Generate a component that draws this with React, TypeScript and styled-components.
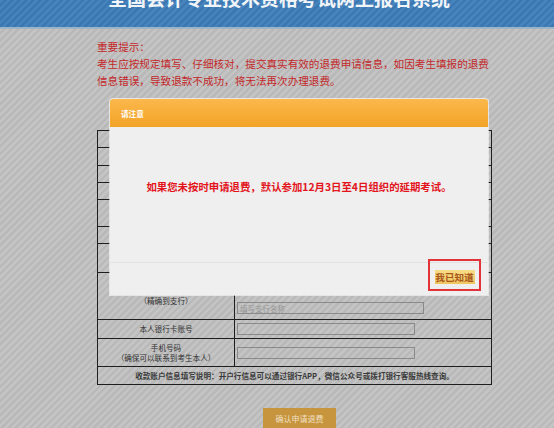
import React from "react";
import styled, { createGlobalStyle } from "styled-components";

const GlobalStyle = createGlobalStyle`
  html, body {
    margin: 0;
    padding: 0;
  }
  body {
    font-family: "Noto Sans CJK SC", "Noto Sans", sans-serif;
    background: #bdbdbd;
  }
`;

type Row = {
  label: string[];
  height: number;
  input?: { width: number; placeholder?: string };
};

// upper rows sit behind the dialog, only their edges show
const rows: Row[] = [
  { label: [], height: 17 },
  { label: [], height: 18 },
  { label: [], height: 17 },
  { label: [], height: 17 },
  { label: [], height: 27 },
  { label: [], height: 17 },
  { label: [], height: 29 },
  {
    label: ["（精确到支行）"],
    height: 47,
    input: { width: 187, placeholder: "填写支行名称" },
  },
  { label: ["本人银行卡账号"], height: 19, input: { width: 178 } },
  {
    label: ["手机号码", "（确保可以联系到考生本人）"],
    height: 28,
    input: { width: 178 },
  },
];

const App = () => {
  return (
    <Page>
      <GlobalStyle />
      <Banner>
        <BannerTitle>全国会计专业技术资格考试网上报名系统</BannerTitle>
      </Banner>

      <Main>
        <Notice>
          <p>重要提示：</p>
          <p>考生应按规定填写、仔细核对，提交真实有效的退费申请信息，如因考生填报的退费</p>
          <p>信息错误，导致退款不成功，将无法再次办理退费。</p>
        </Notice>

        <FormTable>
          <tbody>
            {rows.map((row, i) => (
              <tr key={i} style={{ height: row.height }}>
                <LabelCell $low={i === 7}>
                  {row.label.map((l) => (
                    <div key={l}>{l}</div>
                  ))}
                </LabelCell>
                <ValueCell $low={i === 7}>
                  {row.input && (
                    <Field
                      style={{ width: row.input.width }}
                      placeholder={row.input.placeholder}
                    />
                  )}
                </ValueCell>
              </tr>
            ))}
            <tr style={{ height: 18 }}>
              <NoteCell colSpan={2}>
                收款账户信息填写说明：开户行信息可以通过银行APP，微信公众号或拨打银行客服热线查询。
              </NoteCell>
            </tr>
          </tbody>
        </FormTable>

        <SubmitButton>确认申请退费</SubmitButton>
      </Main>

      <Dialog>
        <DialogHead>请注意</DialogHead>
        <DialogBody>
          如果您未按时申请退费，默认参加12月3日至4日组织的延期考试。
        </DialogBody>
        <DialogFoot>
          <Highlight>
            <ConfirmButton>我已知道</ConfirmButton>
          </Highlight>
        </DialogFoot>
      </Dialog>
    </Page>
  );
};

const Page = styled.div`
  position: relative;
  width: 554px;
  height: 428px;
  overflow: hidden;
  background: repeating-linear-gradient(
    135deg,
    #c4c4c4 0 2.5px,
    #b9b9b9 2.5px 5px
  );
`;

const Banner = styled.div`
  height: 27px;
  overflow: hidden;
  border-bottom: 2px solid #9db3c8;
  background: repeating-linear-gradient(
    135deg,
    #4784bd 0 2.5px,
    #3b78b2 2.5px 5px
  );
`;

const BannerTitle = styled.h1`
  margin: -12px 0 0 0;
  padding-left: 108px;
  font-size: 19px;
  line-height: 19px;
  font-weight: 700;
  color: #f2f5f8;
  white-space: nowrap;
`;

const Main = styled.div`
  padding: 9px 0 0 97px;
`;

const Notice = styled.div`
  color: #c4282a;
  font-size: 10.6px;
  line-height: 17px;

  p {
    margin: 0;
    white-space: nowrap;
  }
`;

const FormTable = styled.table`
  margin-top: 41px;
  width: 395px;
  border-collapse: collapse;
  table-layout: fixed;
  font-size: 7.6px;
  color: #333;

  td {
    border: 1px solid #1e1e1e;
    padding: 0;
  }
`;

const LabelCell = styled.td<{ $low?: boolean }>`
  width: 136px;
  text-align: center;
  vertical-align: ${(p) => (p.$low ? "bottom" : "middle")};
  line-height: 10px;
  padding-bottom: ${(p) => (p.$low ? "13px" : "0")} !important;
`;

const ValueCell = styled.td<{ $low?: boolean }>`
  vertical-align: ${(p) => (p.$low ? "bottom" : "middle")};
  padding: ${(p) => (p.$low ? "0 0 5px 2px" : "0 0 0 2px")} !important;
`;

const Field = styled.input`
  display: block;
  box-sizing: border-box;
  height: 12px;
  padding: 0 2px;
  border: 1px solid #8a8a8a;
  background: transparent;
  font-family: inherit;
  font-size: 7.5px;
  color: #444;

  &::placeholder {
    color: #959595;
    opacity: 1;
  }
`;

const NoteCell = styled.td`
  text-align: center;
  font-weight: 700;
  color: #3a3a3a;
`;

const SubmitButton = styled.button`
  display: block;
  margin: 23px 0 0 166px;
  width: 73px;
  height: 22px;
  border: none;
  background: #c8953f;
  color: #efe0c4;
  font-family: inherit;
  font-size: 8px;
  padding: 0 0 2px;
`;

const Dialog = styled.div`
  position: absolute;
  left: 110px;
  top: 99px;
  width: 378px;
  height: 196px;
  display: flex;
  flex-direction: column;
  background: #efefef;
  border-radius: 3px 3px 0 0;
  box-shadow: 0 0 0 1px rgba(255, 255, 255, 0.6);
`;

const DialogHead = styled.div`
  height: 28px;
  display: flex;
  align-items: center;
  padding-left: 11px;
  border-radius: 3px 3px 0 0;
  background: linear-gradient(#fbb84c, #f3a326);
  color: #fff;
  font-size: 7.6px;
  font-weight: 700;
`;

const DialogBody = styled.div`
  flex: 1;
  padding-top: 54px;
  text-align: center;
  color: #e3141c;
  font-size: 10.4px;
  font-weight: 700;
  line-height: 12px;
  white-space: nowrap;
`;

const DialogFoot = styled.div`
  height: 32px;
  display: flex;
  justify-content: flex-end;
  padding-right: 7px;
  border-top: 1px solid #e2e2e2;
`;

const Highlight = styled.div`
  margin-top: -4px;
  width: 53px;
  height: 32px;
  box-sizing: border-box;
  border: 2px solid #e2333a;
  display: flex;
  align-items: center;
  justify-content: center;
`;

const ConfirmButton = styled.button`
  margin-top: 3px;
  width: 40px;
  height: 14px;
  padding: 0;
  border: none;
  background: linear-gradient(#f7dc86, #eec660);
  color: #a8561a;
  font-family: inherit;
  font-size: 9.6px;
  font-weight: 700;
  line-height: 14px;
  white-space: nowrap;
`;

export default App;
